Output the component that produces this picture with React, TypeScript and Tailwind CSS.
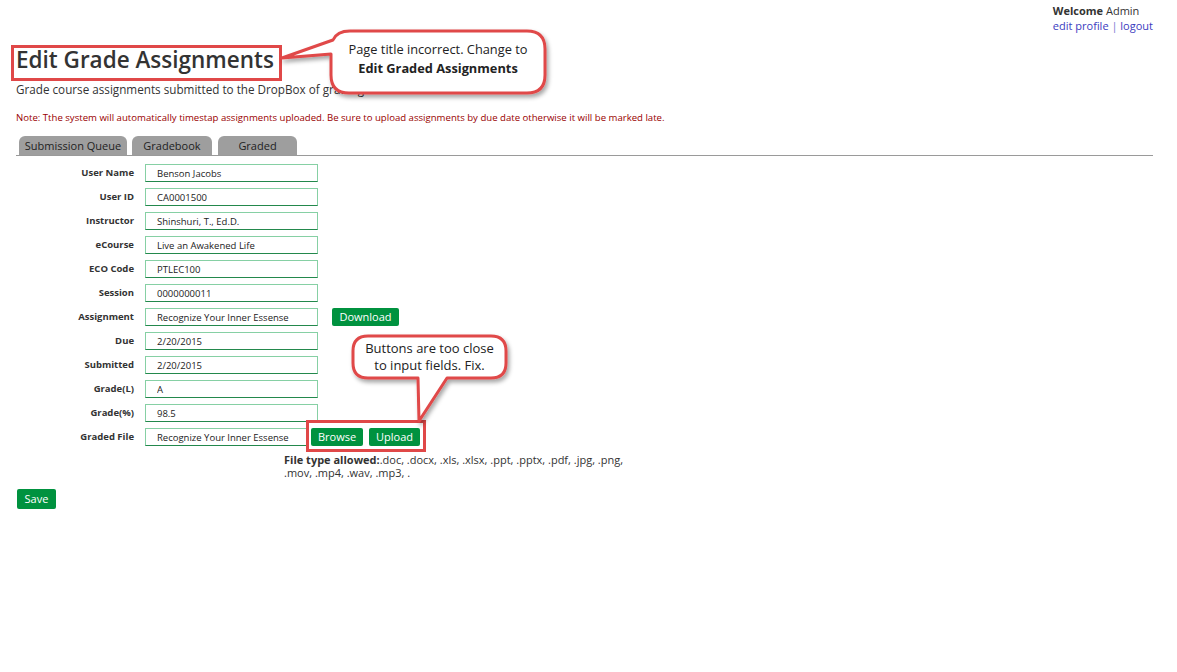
import React from 'react';

const fields: { label: string; value: string }[] = [
  { label: 'User Name', value: 'Benson Jacobs' },
  { label: 'User ID', value: 'CA0001500' },
  { label: 'Instructor', value: 'Shinshuri, T., Ed.D.' },
  { label: 'eCourse', value: 'Live an Awakened Life' },
  { label: 'ECO Code', value: 'PTLEC100' },
  { label: 'Session', value: '0000000011' },
  { label: 'Assignment', value: 'Recognize Your Inner Essense' },
  { label: 'Due', value: '2/20/2015' },
  { label: 'Submitted', value: '2/20/2015' },
  { label: 'Grade(L)', value: 'A' },
  { label: 'Grade(%)', value: '98.5' },
];

const inputCls =
  'h-[18px] border border-[#86d0a4] border-b-[#23884c] bg-white pl-[11px] text-[9.5px] text-[#222] outline-none';

const GreenButton: React.FC<{ label: string; className?: string }> = ({ label, className }) => (
  <button
    className={`h-[18px] rounded-[2px] bg-[#00923f] text-[11px] leading-[18px] text-white ${className ?? ''}`}
  >
    {label}
  </button>
);

// Review annotations drawn over the page
const Annotations: React.FC = () => (
  <>
    <svg
      className="pointer-events-none absolute left-0 top-0"
      width={1177}
      height={672}
      viewBox="0 0 1177 672"
    >
      <defs>
        <filter id="bubbleShadow" x="-20%" y="-20%" width="140%" height="160%">
          <feDropShadow dx="2" dy="3" stdDeviation="2" floodColor="#000" floodOpacity="0.35" />
        </filter>
      </defs>
      <rect x="12.5" y="46.5" width="268" height="33" fill="none" stroke="#e04848" strokeWidth="3" />
      <path
        d="M 350 31 H 527 Q 545 31 545 49 V 75 Q 545 93 527 93 H 349 Q 331 93 331 75 V 54 L 282 58 L 333 40 Q 337 31 350 31 Z"
        fill="#fff"
        stroke="#e04848"
        strokeWidth="3"
        strokeLinejoin="round"
        filter="url(#bubbleShadow)"
      />
      <rect x="307.5" y="421.5" width="117" height="29" fill="none" stroke="#e04848" strokeWidth="3" />
      <path
        d="M 368 336 H 491 Q 506 336 506 351 V 363 Q 506 378 491 378 H 447 L 419 421 L 418 378 H 368 Q 353 378 353 363 V 351 Q 353 336 368 336 Z"
        fill="#fff"
        stroke="#e04848"
        strokeWidth="3"
        strokeLinejoin="round"
        filter="url(#bubbleShadow)"
      />
    </svg>
    <div className="absolute left-[331px] top-[40px] w-[214px] text-center text-[12.8px] leading-[19px] text-[#222]">
      <div>Page title incorrect. Change to</div>
      <div className="font-bold">Edit Graded Assignments</div>
    </div>
    <div className="absolute left-[353px] top-[340px] w-[153px] text-center text-[13px] leading-[17px] text-[#222]">
      <div>Buttons are too close</div>
      <div>to input fields. Fix.</div>
    </div>
  </>
);

export default function App() {
  return (
    <div className="relative min-h-[672px] w-full bg-white font-['Open_Sans',sans-serif] text-[#333]">
      <div className="pl-4 pr-6 pt-[3px]">
        {/* Header */}
        <div className="flex justify-end">
          <div className="text-[11px] leading-[15px]">
            <div>
              <span className="font-bold">Welcome</span> Admin
            </div>
            <div className="text-[#3c3cc0]">
              <a href="#">edit profile</a> <span className="text-[#7a7ad0]">|</span> <a href="#">logout</a>
            </div>
          </div>
        </div>

        <h1 className="mt-[11px] text-[22.5px] font-semibold leading-[32px] text-[#333]">Edit Grade Assignments</h1>
        <p className="mt-[5px] text-[11.7px] leading-[16px] text-[#333]">
          Grade course assignments submitted to the DropBox of grading
        </p>
        <p className="mt-[15px] text-[9.6px] leading-[12px] text-[#990000]">
          Note: Tthe system will automatically timestap assignments uploaded. Be sure to upload assignments by due date
          otherwise it will be marked late.
        </p>

        {/* Tabs */}
        <div className="mt-[12px] flex items-end border-b border-[#9a9a9a] pl-[3px]">
          <div className="h-[19px] w-[108px] rounded-t-[6px] bg-[#9e9e9e] text-center text-[11px] leading-[19px] text-[#222]">
            Submission Queue
          </div>
          <div className="ml-[5px] h-[19px] w-[80px] rounded-t-[6px] bg-[#9e9e9e] text-center text-[11px] leading-[19px] text-[#222]">
            Gradebook
          </div>
          <div className="ml-[6px] h-[19px] w-[79px] rounded-t-[6px] bg-[#9e9e9e] text-center text-[11px] leading-[19px] text-[#222]">
            Graded
          </div>
        </div>

        {/* Form */}
        <div className="mt-[8px] flex flex-col gap-[6px]">
          {fields.map((f) => (
            <div key={f.label} className="flex items-center">
              <label className="w-[118px] text-right text-[9.5px] font-bold text-[#333]">{f.label}</label>
              <input readOnly value={f.value} className={`ml-[11px] w-[173px] ${inputCls}`} />
              {f.label === 'Assignment' && <GreenButton label="Download" className="ml-[14px] w-[67px]" />}
            </div>
          ))}
          <div className="flex items-center">
            <label className="w-[118px] text-right text-[9.5px] font-bold text-[#333]">Graded File</label>
            <input readOnly value="Recognize Your Inner Essense" className={`ml-[11px] w-[162px] ${inputCls}`} />
            <GreenButton label="Browse" className="ml-[4px] w-[52px]" />
            <GreenButton label="Upload" className="ml-[6px] w-[51px]" />
          </div>
        </div>

        <div className="ml-[268px] mt-[7px] w-[350px] text-[11px] leading-[13px] text-[#333]">
          <span className="font-bold">File type allowed:</span>.doc, .docx, .xls, .xlsx, .ppt, .pptx, .pdf, .jpg, .png,
          <br />
          .mov, .mp4, .wav, .mp3, .
        </div>

        <GreenButton label="Save" className="ml-[1px] mt-[10px] h-[20px] w-[39px] leading-[20px]" />
      </div>

      <Annotations />
    </div>
  );
}
